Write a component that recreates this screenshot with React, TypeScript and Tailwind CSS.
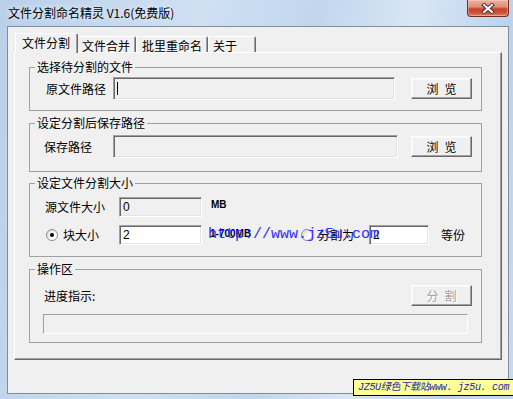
import React from "react";

const sunken =
  "border border-t-[#a0a0a0] border-l-[#a0a0a0] border-b-white border-r-white shadow-[inset_1px_1px_0_#696969,inset_-1px_-1px_0_#e3e3e3]";
const raised =
  "border border-t-white border-l-white border-b-[#696969] border-r-[#696969] shadow-[inset_-1px_-1px_0_#a0a0a0,inset_1px_1px_0_#f8f8f8]";

function Btn({ a, b, disabled, className = "" }: { a: string; b: string; disabled?: boolean; className?: string }) {
  return (
    <div
      className={`flex h-[21px] w-[61px] items-center justify-center gap-[6px] bg-[#f0f0f0] leading-[14px] ${raised} ${
        disabled ? "text-[#a0a0a0] [text-shadow:1px_1px_0_#ffffff]" : "text-black"
      } ${className}`}
    >
      <span>{a}</span>
      <span>{b}</span>
    </div>
  );
}

function Radio({ checked }: { checked?: boolean }) {
  return (
    <span className="flex h-[12px] w-[12px] shrink-0 items-center justify-center rounded-full border border-[#8c8c8c] bg-[linear-gradient(135deg,#d8d8d8,#ffffff_70%)]">
      {checked && <span className="h-[4px] w-[4px] rounded-full bg-black" />}
    </span>
  );
}

function Group({ title, className = "", children }: { title: string; className?: string; children: React.ReactNode }) {
  return (
    <fieldset className={`w-[453px] border border-[#a0a0a0] ${className}`}>
      <legend className="ml-[5px] px-[2px] leading-[14px]">{title}</legend>
      {children}
    </fieldset>
  );
}

export default function App() {
  return (
    <div className="relative h-[399px] w-[513px] overflow-hidden bg-[linear-gradient(100deg,#b9d0ea_0%,#cfe0f2_35%,#c1d6ed_55%,#d9e6f5_72%,#bcd3eb_88%,#c7dbf0_100%)] font-['Noto_Sans_CJK_SC',sans-serif] text-[12px] text-black">
      {/* title bar */}
      <div className="flex h-[26px] items-start justify-between">
        <div className="pl-[8px] pt-[6px] leading-[14px] [text-shadow:0_0_6px_rgba(255,255,255,0.95)]">
          文件分割命名精灵 V1.6(免费版)
        </div>
        <div className="mr-[4px] flex h-[17px] w-[42px] items-center justify-center rounded-b-[4px] border border-t-0 border-[#6e2c22] bg-[linear-gradient(180deg,#ebb4a6_0%,#df8f7b_42%,#c5432f_56%,#cc5239_80%,#e2866a_100%)] shadow-[inset_0_0_0_1px_rgba(255,210,200,0.45)]">
          <svg width="14" height="11" viewBox="0 0 14 11">
            <path d="M3 2 L11 9 M11 2 L3 9" stroke="#4a3030" strokeWidth="4" strokeLinecap="square" />
            <path d="M3 2 L11 9 M11 2 L3 9" stroke="#ffffff" strokeWidth="2" strokeLinecap="square" />
          </svg>
        </div>
      </div>

      {/* client area */}
      <div className="ml-[7px] h-[368px] w-[502px] border border-[#7f8e9e] bg-[#f0f0f0] pl-[6px] pt-[6px]">
        {/* tabs */}
        <div className="ml-[1px] flex h-[19px] items-end whitespace-nowrap">
          <div className="relative z-10 -mb-[1px] h-[20px] w-[63px] rounded-t-[2px] border-l border-t border-r border-l-white border-t-white border-r-[#696969] bg-[#f0f0f0] pl-[6px] pt-[2px] leading-[14px] shadow-[inset_-1px_0_0_#a0a0a0]">
            文件分割
          </div>
          <div className="h-[16px] w-[58px] rounded-t-[2px] border-t border-r border-t-white border-r-[#696969] pl-[4px] pt-[2px] leading-[14px] shadow-[inset_-1px_0_0_#a0a0a0]">
            文件合并
          </div>
          <div className="h-[16px] w-[72px] rounded-t-[2px] border-l border-t border-r border-l-white border-t-white border-r-[#696969] pl-[5px] pt-[2px] leading-[14px] shadow-[inset_-1px_0_0_#a0a0a0]">
            批里重命名
          </div>
          <div className="h-[16px] w-[48px] rounded-t-[2px] border-l border-t border-r border-l-white border-t-white border-r-[#696969] pl-[4px] pt-[2px] leading-[14px] shadow-[inset_-1px_0_0_#a0a0a0]">
            关于
          </div>
        </div>

        {/* tab panel */}
        <div className="h-[308px] w-[488px] border border-t-white border-l-white border-b-[#696969] border-r-[#696969] pl-[14px] pt-[7px] shadow-[inset_-1px_-1px_0_#a0a0a0]">
          <Group title="选择待分割的文件" className="pb-[10px]">
            <div className="flex items-center pl-[16px] pt-[3px]">
              <span className="w-[67px] leading-[14px]">原文件路径</span>
              <div className={`flex h-[23px] w-[282px] items-center bg-[#f0f0f0] pl-[3px] ${sunken}`}>
                <span className="h-[13px] w-[1px] bg-black" />
              </div>
              <Btn a="浏" b="览" className="ml-[16px]" />
            </div>
          </Group>

          <Group title="设定分割后保存路径" className="mt-[5px] pb-[13px]">
            <div className="flex items-center pl-[14px] pt-[5px]">
              <span className="w-[69px] leading-[14px]">保存路径</span>
              <div className={`h-[23px] w-[285px] bg-[#f0f0f0] ${sunken}`} />
              <Btn a="浏" b="览" className="ml-[13px]" />
            </div>
          </Group>

          <Group title="设定文件分割大小" className="mt-[4px] pb-[11px]">
            <div className="flex items-start pl-[15px] pt-[7px]">
              <span className="mt-[3px] w-[74px] leading-[14px]">源文件大小</span>
              <div className={`flex h-[20px] w-[83px] items-center bg-[#f0f0f0] pl-[3px] font-['Liberation_Sans',sans-serif] text-[12px] ${sunken}`}>
                0
              </div>
              <span className="ml-[9px] mt-[2px] font-['Liberation_Sans',sans-serif] text-[10px] font-bold leading-[12px]">
                MB
              </span>
            </div>
            <div className="relative mt-[8px] flex items-center whitespace-nowrap pl-[16px]">
              <Radio checked />
              <span className="ml-[5px] w-[36px] leading-[14px]">块大小</span>
              <div className={`ml-[20px] flex h-[20px] w-[83px] items-center bg-white pl-[3px] font-['Liberation_Sans',sans-serif] text-[12px] ${sunken}`}>
                2
              </div>
              <span className="-mt-[3px] ml-[8px] w-[41px] font-['Liberation_Sans',sans-serif] text-[10px] font-bold leading-[12px]">
                1-700MB
              </span>
              <span className="ml-[50px]">
                <Radio />
              </span>
              <span className="ml-[5px] w-[36px] leading-[14px]">分割为</span>
              <div className={`ml-[15px] flex h-[20px] w-[60px] items-center bg-white pl-[3px] font-['Liberation_Sans',sans-serif] text-[12px] ${sunken}`}>
                2
              </div>
              <span className="ml-[12px] leading-[14px]">等份</span>
              <span className="pointer-events-none absolute left-[178px] top-[1px] z-10 font-['Liberation_Mono',monospace] text-[15px] leading-[17px] text-[#2f2fff]">
                http://www.jz5u.com
              </span>
            </div>
          </Group>

          <Group title="操作区" className="mt-[5px] pb-[8px]">
            <div className="flex items-center pl-[14px] pt-[9px]">
              <span className="leading-[14px]">进度指示:</span>
              <Btn a="分" b="割" disabled className="ml-auto mr-[9px]" />
            </div>
            <div className="ml-[13px] mt-[8px] h-[20px] w-[425px] border border-t-[#a0a0a0] border-l-[#a0a0a0] border-b-white border-r-white bg-[#f0f0f0]" />
          </Group>
        </div>
      </div>

      {/* watermark */}
      <div className="absolute left-[353px] top-[379px] flex h-[17px] w-[162px] items-center whitespace-nowrap border border-black bg-[#ffff99] pl-[4px] font-['Liberation_Mono','Noto_Sans_CJK_SC',monospace] text-[10px] italic leading-[15px] tracking-[-0.3px] text-[#2424a8]">
        JZ5U绿色下载站www. jz5u. com
      </div>
    </div>
  );
}
